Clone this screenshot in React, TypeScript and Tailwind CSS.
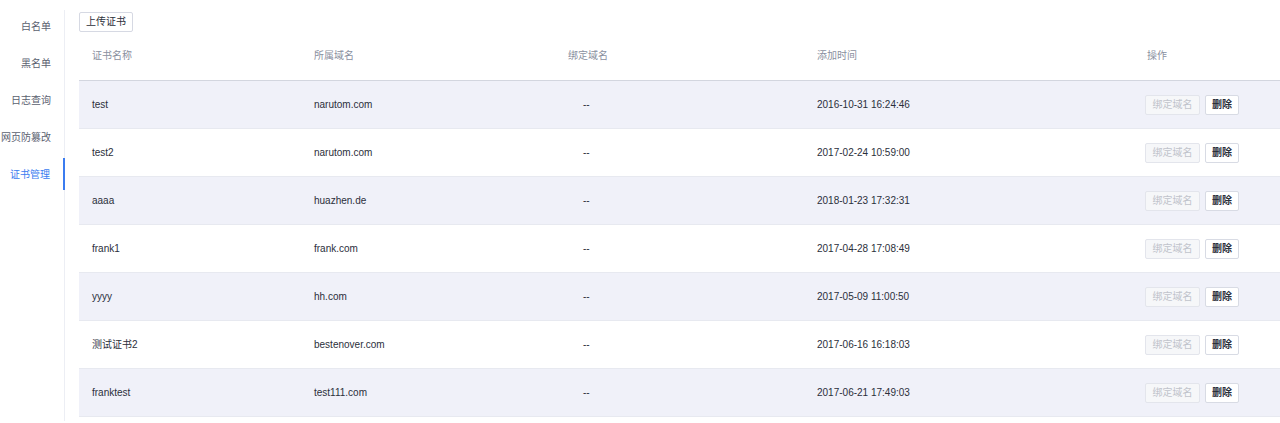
import React from "react";

const rows = [
  { name: "test", domain: "narutom.com", time: "2016-10-31 16:24:46" },
  { name: "test2", domain: "narutom.com", time: "2017-02-24 10:59:00" },
  { name: "aaaa", domain: "huazhen.de", time: "2018-01-23 17:32:31" },
  { name: "frank1", domain: "frank.com", time: "2017-04-28 17:08:49" },
  { name: "yyyy", domain: "hh.com", time: "2017-05-09 11:00:50" },
  { name: "测试证书2", domain: "bestenover.com", time: "2017-06-16 16:18:03" },
  { name: "franktest", domain: "test111.com", time: "2017-06-21 17:49:03" },
];

const menu = ["白名单", "黑名单", "日志查询", "网页防篡改", "证书管理"];

export default function App() {
  return (
    <div
      className="flex w-[1280px] h-[423px] bg-white text-[10px] text-[#2b2f3b]"
      style={{ fontFamily: '"Liberation Sans", Arial, "Noto Sans CJK SC", sans-serif' }}
    >
      <div className="w-[65px] shrink-0 pt-[12px]">
        <div className="h-full border-r border-[#eceef4] flex flex-col gap-[5px] -mt-[2px]">
          {menu.map((m, i) => (
            <div
              key={m}
              className={
                "h-[32px] flex items-center justify-end pr-[13px] whitespace-nowrap " +
                (i === 4
                  ? "text-[#3b7cf0] border-r-2 border-[#3b7cf0] -mr-[1px]"
                  : "text-[#5b6170]")
              }
            >
              {m}
            </div>
          ))}
        </div>
      </div>
      <div className="flex-1 pl-[14px] pt-[12px]">
        <button className="h-[20px] w-[54px] border border-[#d6d9e3] rounded-[2px] bg-white text-[10px] text-[#2b2f3b] leading-none">
          上传证书
        </button>
        <div className="flex h-[49px] items-center border-b border-[#d3d6df] text-[#8a90a0] pb-[2px]">
          <div className="w-[222px] pl-[13px]">证书名称</div>
          <div className="w-[254px] pl-[13px]">所属域名</div>
          <div className="w-[249px] pl-[13px]">绑定域名</div>
          <div className="w-[330px] pl-[13px]">添加时间</div>
          <div className="flex-1 pl-[13px]">操作</div>
        </div>
        {rows.map((r, i) => (
          <div
            key={r.name}
            className={
              "flex h-[48px] items-center border-b border-[#e7e9f0] " +
              (i % 2 === 0 ? "bg-[#f0f1f9]" : "bg-white")
            }
          >
            <div className="w-[222px] pl-[13px]">{r.name}</div>
            <div className="w-[254px] pl-[13px]">{r.domain}</div>
            <div className="w-[249px] pl-[28px]">--</div>
            <div className="w-[330px] pl-[13px]">{r.time}</div>
            <div className="flex-1 pl-[11px] flex gap-[5px]">
              <button className="h-[20px] w-[55px] border border-[#e3e5ec] rounded-[2px] bg-[#f6f7f9] text-[#c0c3cb] text-[10px] leading-none">
                绑定域名
              </button>
              <button className="h-[20px] w-[34px] border border-[#d8dbe4] rounded-[2px] bg-white text-[#2b2f3b] text-[10px] font-bold leading-none">
                删除
              </button>
            </div>
          </div>
        ))}
      </div>
    </div>
  );
}
